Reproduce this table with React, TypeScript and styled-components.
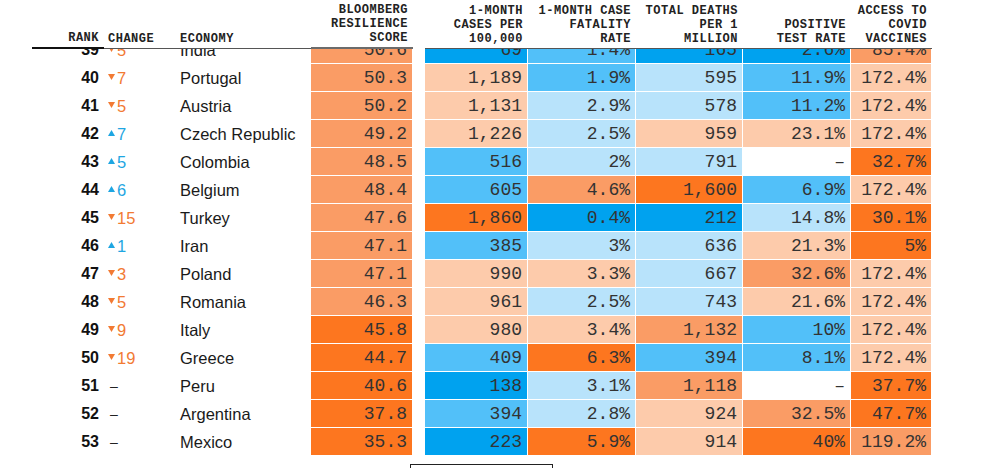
import React from 'react'
import styled, { createGlobalStyle } from 'styled-components'

type Tone = 'so' | 'mo' | 'po' | 'lb' | 'mb' | 'db' | 'w'

const tones: Record<Tone, string> = {
  so: '#fd761f',
  mo: '#fa9c65',
  po: '#fdcbab',
  lb: '#b8e3fb',
  mb: '#52c0f9',
  db: '#00a2ef',
  w: '#ffffff',
}

interface Cell {
  v: string
  t: Tone
}

interface RowData {
  rank: number
  change: number | null
  economy: string
  cells: Cell[]
}

const c = (v: string, t: Tone): Cell => ({ v, t })

const rows: RowData[] = [
  { rank: 39, change: -5, economy: 'India', cells: [c('50.6', 'mo'), c('69', 'db'), c('1.4%', 'mb'), c('165', 'db'), c('2.6%', 'db'), c('85.4%', 'mo')] },
  { rank: 40, change: -7, economy: 'Portugal', cells: [c('50.3', 'mo'), c('1,189', 'po'), c('1.9%', 'mb'), c('595', 'lb'), c('11.9%', 'mb'), c('172.4%', 'po')] },
  { rank: 41, change: -5, economy: 'Austria', cells: [c('50.2', 'mo'), c('1,131', 'po'), c('2.9%', 'lb'), c('578', 'lb'), c('11.2%', 'mb'), c('172.4%', 'po')] },
  { rank: 42, change: 7, economy: 'Czech Republic', cells: [c('49.2', 'mo'), c('1,226', 'po'), c('2.5%', 'lb'), c('959', 'po'), c('23.1%', 'po'), c('172.4%', 'po')] },
  { rank: 43, change: 5, economy: 'Colombia', cells: [c('48.5', 'mo'), c('516', 'mb'), c('2%', 'lb'), c('791', 'lb'), c('–', 'w'), c('32.7%', 'so')] },
  { rank: 44, change: 6, economy: 'Belgium', cells: [c('48.4', 'mo'), c('605', 'mb'), c('4.6%', 'mo'), c('1,600', 'so'), c('6.9%', 'mb'), c('172.4%', 'po')] },
  { rank: 45, change: -15, economy: 'Turkey', cells: [c('47.6', 'mo'), c('1,860', 'so'), c('0.4%', 'db'), c('212', 'db'), c('14.8%', 'lb'), c('30.1%', 'so')] },
  { rank: 46, change: 1, economy: 'Iran', cells: [c('47.1', 'mo'), c('385', 'mb'), c('3%', 'lb'), c('636', 'lb'), c('21.3%', 'po'), c('5%', 'so')] },
  { rank: 47, change: -3, economy: 'Poland', cells: [c('47.1', 'mo'), c('990', 'po'), c('3.3%', 'po'), c('667', 'lb'), c('32.6%', 'mo'), c('172.4%', 'po')] },
  { rank: 48, change: -5, economy: 'Romania', cells: [c('46.3', 'mo'), c('961', 'po'), c('2.5%', 'lb'), c('743', 'lb'), c('21.6%', 'po'), c('172.4%', 'po')] },
  { rank: 49, change: -9, economy: 'Italy', cells: [c('45.8', 'so'), c('980', 'po'), c('3.4%', 'po'), c('1,132', 'mo'), c('10%', 'mb'), c('172.4%', 'po')] },
  { rank: 50, change: -19, economy: 'Greece', cells: [c('44.7', 'so'), c('409', 'mb'), c('6.3%', 'so'), c('394', 'mb'), c('8.1%', 'mb'), c('172.4%', 'po')] },
  { rank: 51, change: null, economy: 'Peru', cells: [c('40.6', 'so'), c('138', 'db'), c('3.1%', 'lb'), c('1,118', 'mo'), c('–', 'w'), c('37.7%', 'so')] },
  { rank: 52, change: null, economy: 'Argentina', cells: [c('37.8', 'so'), c('394', 'mb'), c('2.8%', 'lb'), c('924', 'po'), c('32.5%', 'mo'), c('47.7%', 'so')] },
  { rank: 53, change: null, economy: 'Mexico', cells: [c('35.3', 'so'), c('223', 'db'), c('5.9%', 'so'), c('914', 'po'), c('40%', 'so'), c('119.2%', 'mo')] },
]

const headers = [
  ['BLOOMBERG', 'RESILIENCE', 'SCORE'],
  ['1-MONTH', 'CASES PER', '100,000'],
  ['1-MONTH CASE', 'FATALITY', 'RATE'],
  ['TOTAL DEATHS', 'PER 1', 'MILLION'],
  ['POSITIVE', 'TEST RATE'],
  ['ACCESS TO', 'COVID', 'VACCINES'],
]

const GlobalStyle = createGlobalStyle`
  body {
    margin: 0;
    background: #fff;
    font-family: "Liberation Sans", Arial, sans-serif;
  }
`

const COLUMNS = '72px 72px 135px 102px 12px 103px 108px 107px 108px 81px'

const Page = styled.div`
  width: 981px;
  height: 468px;
  overflow: hidden;
  padding-left: 32px;
  box-sizing: border-box;
`

const Table = styled.div`
  width: 900px;
`

const HeadRow = styled.div`
  display: grid;
  grid-template-columns: ${COLUMNS};
  height: 49px;
  background: #fff;
`

const HeadCell = styled.div<{ $align?: 'left' | 'right'; $rule?: 'heavy' | 'grey' | 'thin' | 'none' }>`
  display: flex;
  flex-direction: column;
  justify-content: flex-end;
  align-items: ${(p) => (p.$align === 'left' ? 'flex-start' : 'flex-end')};
  padding: 0 ${(p) => (p.$align === 'left' ? '0' : '5px')} 2px
    ${(p) => (p.$align === 'left' ? '4px' : '0')};
  font-family: "Liberation Mono", "DejaVu Sans Mono", monospace;
  font-weight: bold;
  font-size: 12px;
  line-height: 14px;
  letter-spacing: 0.5px;
  color: #222;
  white-space: nowrap;
  box-sizing: border-box;
  border-bottom: ${(p) =>
    p.$rule === 'heavy'
      ? '2px solid #111'
      : p.$rule === 'grey'
      ? '2px solid #6b6b6b'
      : p.$rule === 'thin'
      ? '1px solid #555'
      : 'none'};
`

const BodyClip = styled.div`
  height: 407px;
  overflow: hidden;
`

const Rows = styled.div`
  margin-top: -13px;
`

const Row = styled.div`
  display: grid;
  grid-template-columns: ${COLUMNS};
  height: 28px;
`

const Rank = styled.div`
  display: flex;
  align-items: center;
  justify-content: flex-end;
  padding-right: 5px;
  font-weight: bold;
  font-size: 16px;
  color: #111;
`

const Change = styled.div<{ $dir: 'up' | 'down' | 'none' }>`
  display: flex;
  align-items: center;
  gap: 2px;
  padding-left: 4px;
  font-size: 16.5px;
  color: ${(p) => (p.$dir === 'up' ? '#1ea6e2' : p.$dir === 'down' ? '#f27a33' : '#222')};
`

const Dash = styled.span`
  padding-left: 2px;
  font-size: 14px;
`

const Economy = styled.div`
  display: flex;
  align-items: center;
  padding-left: 4px;
  font-size: 16.5px;
  color: #1a1a1a;
  white-space: nowrap;
`

const Spacer = styled.div``

const DataCell = styled.div<{ $bg: string }>`
  display: flex;
  align-items: center;
  justify-content: flex-end;
  padding-right: 5px;
  background: ${(p) => p.$bg};
  border-right: 1px solid #fff;
  border-bottom: 1px solid #fff;
  box-sizing: border-box;
  font-family: "Liberation Mono", "DejaVu Sans Mono", monospace;
  font-size: 18px;
  color: #333;
`

const MoreButton = styled.button`
  display: block;
  margin: 8px 0 0 378px;
  width: 143px;
  height: 36px;
  padding-top: 14px;
  background: #fff;
  border: 1px solid #222;
  border-radius: 0;
  font-family: "Liberation Mono", monospace;
  font-size: 12px;
  letter-spacing: 0.5px;
  color: #222;
`

const Arrow = ({ up }: { up: boolean }) => (
  <svg width="7" height="6" viewBox="0 0 7 6" style={{ marginTop: -2 }}>
    {up ? <polygon points="3.5,0 7,6 0,6" fill="currentColor" /> : <polygon points="0,0 7,0 3.5,6" fill="currentColor" />}
  </svg>
)

export default function App() {
  return (
    <Page>
      <GlobalStyle />
      <Table>
        <HeadRow>
          <HeadCell $rule="heavy">RANK</HeadCell>
          <HeadCell $align="left" $rule="thin">CHANGE</HeadCell>
          <HeadCell $align="left" $rule="thin">ECONOMY</HeadCell>
          {headers.map((lines, i) => (
            <React.Fragment key={i}>
              <HeadCell $rule={i === 0 ? 'grey' : 'thin'}>
                {lines.map((l) => (
                  <span key={l}>{l}</span>
                ))}
              </HeadCell>
              {i === 0 && <Spacer />}
            </React.Fragment>
          ))}
        </HeadRow>
        <BodyClip>
          <Rows>
            {rows.map((r) => {
              const dir = r.change === null ? 'none' : r.change > 0 ? 'up' : 'down'
              return (
                <Row key={r.rank}>
                  <Rank>{r.rank}</Rank>
                  <Change $dir={dir}>
                    {r.change === null ? (
                      <Dash>–</Dash>
                    ) : (
                      <>
                        <Arrow up={r.change > 0} />
                        {Math.abs(r.change)}
                      </>
                    )}
                  </Change>
                  <Economy>{r.economy}</Economy>
                  {r.cells.map((cell, i) => (
                    <React.Fragment key={i}>
                      <DataCell $bg={tones[cell.t]}>{cell.v}</DataCell>
                      {i === 0 && <Spacer />}
                    </React.Fragment>
                  ))}
                </Row>
              )
            })}
          </Rows>
        </BodyClip>
      </Table>
      <MoreButton>SHOW ALL</MoreButton>
    </Page>
  )
}
